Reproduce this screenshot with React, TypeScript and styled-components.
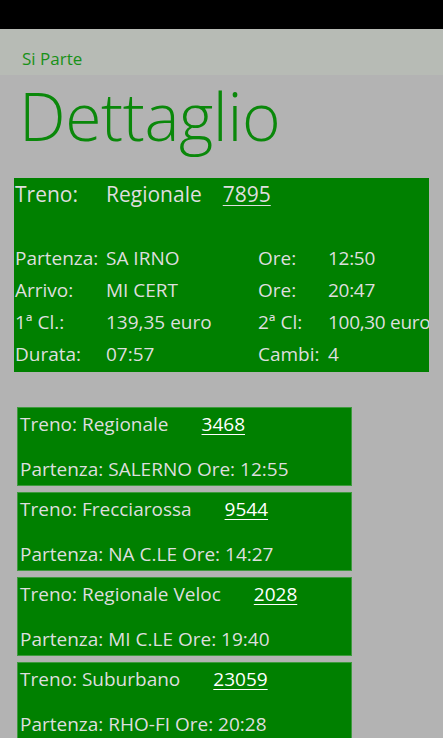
import styled, { createGlobalStyle } from 'styled-components';

const GlobalStyle = createGlobalStyle`
  html, body {
    margin: 0;
    padding: 0;
    background: #b3b3b3;
  }
  body {
    font-family: 'Open Sans', 'Noto Sans', sans-serif;
  }
`;

const trains = [
  { name: 'Regionale', number: '3468', station: 'SALERNO', time: '12:55' },
  { name: 'Frecciarossa', number: '9544', station: 'NA C.LE', time: '14:27' },
  { name: 'Regionale Veloc', number: '2028', station: 'MI C.LE', time: '19:40' },
  { name: 'Suburbano', number: '23059', station: 'RHO-FI', time: '20:28' },
];

const details = [
  ['Partenza:', 'SA IRNO', 'Ore:', '12:50'],
  ['Arrivo:', 'MI CERT', 'Ore:', '20:47'],
  ['1ª Cl.:', '139,35 euro', '2ª Cl:', '100,30 euro'],
  ['Durata:', '07:57', 'Cambi:', '4'],
];

export default function App() {
  return (
    <>
      <GlobalStyle />
      <Screen>
        <StatusBar />
        <AppTitleBar>
          <AppTitle>Si Parte</AppTitle>
        </AppTitleBar>
        <PageTitle>Dettaglio</PageTitle>

        <DetailCard>
          <DetailGrid>
            <Cell $large>Treno:</Cell>
            <TrainNameCell>
              <span>Regionale</span>
              <TrainNumber $muted>7895</TrainNumber>
            </TrainNameCell>
            <BlankRow />
            {details.map(row =>
              row.map((text, i) => (
                <Cell key={row[0] + i} $tight={i === 3}>
                  {text}
                </Cell>
              )),
            )}
          </DetailGrid>
        </DetailCard>

        <TrainList>
          {trains.map(train => (
            <TrainCard key={train.number}>
              <TrainLine>
                <span>Treno: {train.name}</span>
                <TrainNumber>{train.number}</TrainNumber>
              </TrainLine>
              <TrainLine>
                Partenza: {train.station} Ore: {train.time}
              </TrainLine>
            </TrainCard>
          ))}
        </TrainList>
      </Screen>
    </>
  );
}

const Screen = styled.div`
  width: 443px;
  height: 738px;
  overflow: hidden;
  background: #b3b3b3;
  display: flex;
  flex-direction: column;
`;

const StatusBar = styled.div`
  height: 29px;
  background: #000;
  flex-shrink: 0;
`;

const AppTitleBar = styled.div`
  height: 46px;
  background: #b7bbb5;
  padding-left: 22px;
  display: flex;
  align-items: flex-start;
  flex-shrink: 0;
`;

const AppTitle = styled.span`
  margin-top: 18px;
  font-size: 17px;
  line-height: 24px;
  color: #179117;
`;

const PageTitle = styled.h1`
  margin: 0 0 0 19px;
  font-size: 66px;
  font-weight: 300;
  line-height: 80px;
  color: #0a880a;
  letter-spacing: -0.4px;
`;

const DetailCard = styled.div`
  margin: 23px 0 0 14px;
  width: 415px;
  height: 194px;
  background: #008000;
  overflow: hidden;
  flex-shrink: 0;
`;

const DetailGrid = styled.div`
  display: grid;
  grid-template-columns: 91px 152px 70px 1fr;
  grid-auto-rows: 32px;
  padding-left: 1px;
  font-size: 19px;
  line-height: 32px;
  color: #dedede;
  white-space: nowrap;
`;

const Cell = styled.div<{ $large?: boolean; $tight?: boolean }>`
  white-space: nowrap;
  font-size: ${props => (props.$large ? '21px' : '19px')};
  letter-spacing: ${props => (props.$tight ? '-0.3px' : 'normal')};
`;

const TrainNameCell = styled.div`
  grid-column: 2 / 5;
  display: flex;
  gap: 21px;
  font-size: 21px;
`;

const BlankRow = styled.div`
  grid-column: 1 / 5;
`;

const TrainNumber = styled.span<{ $muted?: boolean }>`
  color: ${props => (props.$muted ? '#dedede' : '#fff')};
  text-decoration: underline;
  text-underline-offset: 3px;
  text-decoration-thickness: 1px;
`;

const TrainList = styled.div`
  margin: 35px 0 0 17px;
  display: flex;
  flex-direction: column;
  gap: 6px;
`;

const TrainCard = styled.div`
  width: 335px;
  height: 79px;
  box-sizing: border-box;
  background: #008000;
  border: 1px solid #3f9a3f;
  padding: 0 0 0 2px;
  display: flex;
  flex-direction: column;
  justify-content: space-between;
  flex-shrink: 0;
`;

const TrainLine = styled.div`
  display: flex;
  gap: 33px;
  font-size: 19px;
  line-height: 32px;
  color: #dedede;
  white-space: nowrap;
`;
